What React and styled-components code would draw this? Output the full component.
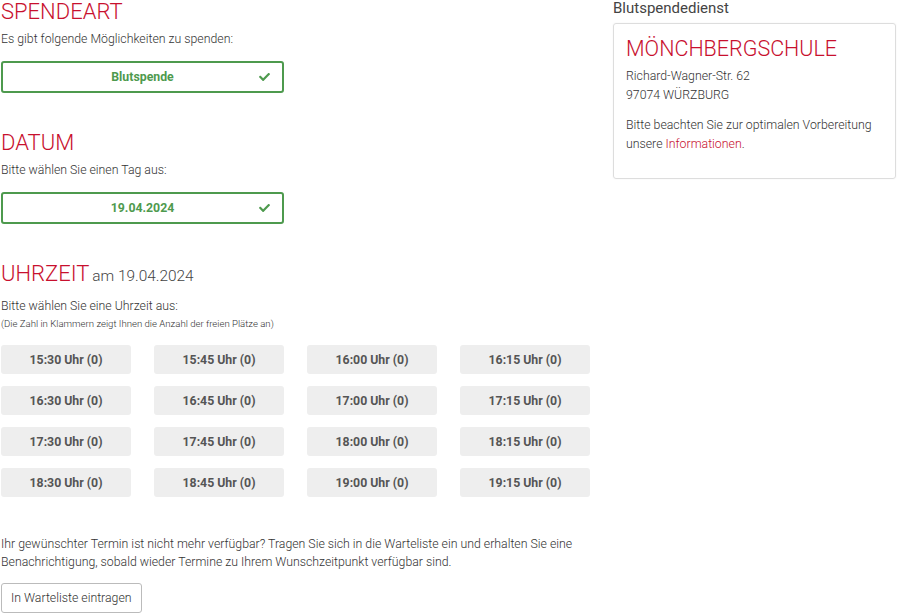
import React from "react";
import styled, { createGlobalStyle } from "styled-components";
import { FaCheck } from "react-icons/fa";

const GlobalStyle = createGlobalStyle`
  body {
    margin: 0;
    background: #fff;
    font-family: Roboto, "Liberation Sans", sans-serif;
    color: #444;
  }
`;

const slots = [
  "15:30", "15:45", "16:00", "16:15",
  "16:30", "16:45", "17:00", "17:15",
  "17:30", "17:45", "18:00", "18:15",
  "18:30", "18:45", "19:00", "19:15",
];

const App = () => {
  return (
    <>
      <GlobalStyle />
      <Page>
        <Main>
          <Section>
            <Heading>SPENDEART</Heading>
            <Hint>Es gibt folgende Möglichkeiten zu spenden:</Hint>
            <Choice>
              Blutspende
              <CheckMark><FaCheck /></CheckMark>
            </Choice>
          </Section>

          <Section>
            <Heading>DATUM</Heading>
            <Hint>Bitte wählen Sie einen Tag aus:</Hint>
            <Choice>
              19.04.2024
              <CheckMark><FaCheck /></CheckMark>
            </Choice>
          </Section>

          <Section>
            <Heading>
              UHRZEIT <SubHeading>am 19.04.2024</SubHeading>
            </Heading>
            <Hint $gap={9}>Bitte wählen Sie eine Uhrzeit aus:</Hint>
            <SmallHint>(Die Zahl in Klammern zeigt Ihnen die Anzahl der freien Plätze an)</SmallHint>
            <SlotGrid>
              {slots.map((s) => (
                <Slot key={s}>{s} Uhr (0)</Slot>
              ))}
            </SlotGrid>
          </Section>

          <WaitText>
            Ihr gewünschter Termin ist nicht mehr verfügbar? Tragen Sie sich in die Warteliste ein und erhalten Sie eine
            Benachrichtigung, sobald wieder Termine zu Ihrem Wunschzeitpunkt verfügbar sind.
          </WaitText>
          <WaitButton>In Warteliste eintragen</WaitButton>
        </Main>

        <Aside>
          <AsideTitle>Blutspendedienst</AsideTitle>
          <Card>
            <CardTitle>MÖNCHBERGSCHULE</CardTitle>
            <CardText>
              Richard-Wagner-Str. 62
              <br />
              97074 WÜRZBURG
            </CardText>
            <CardText>
              Bitte beachten Sie zur optimalen Vorbereitung unsere <Link>Informationen</Link>.
            </CardText>
          </Card>
        </Aside>
      </Page>
    </>
  );
};

const Page = styled.div`
  display: grid;
  grid-template-columns: 590px 283px;
  column-gap: 22px;
  padding-left: 1px;
  width: 898px;
  box-sizing: border-box;
`;

const Main = styled.div`
  display: flex;
  flex-direction: column;
  align-items: flex-start;
`;

const Section = styled.section`
  width: 100%;
  margin-bottom: 38px;
`;

const Heading = styled.h2`
  margin: 0;
  font-size: 22px;
  line-height: 24px;
  font-weight: 300;
  color: #c8102e;
`;

const SubHeading = styled.span`
  font-size: 15.4px;
  color: #444;
  margin-left: -2px;
`;

const Hint = styled.p`
  margin: ${(p) => p.$gap || 6}px 0 0;
  font-size: 12.3px;
  line-height: 18px;
  font-weight: 300;
  color: #333;
`;

const SmallHint = styled.p`
  margin: 2px 0 0;
  font-size: 9.6px;
  line-height: 14px;
  font-weight: 300;
  color: #333;
`;

const Choice = styled.div`
  position: relative;
  margin-top: 13px;
  width: 283px;
  height: 32px;
  box-sizing: border-box;
  border: 2px solid #4e9a4e;
  border-radius: 3px;
  display: flex;
  align-items: center;
  justify-content: center;
  font-size: 12.3px;
  font-weight: 700;
  color: #4e9a4e;
`;

const CheckMark = styled.span`
  position: absolute;
  right: 12px;
  top: 50%;
  transform: translateY(-50%);
  display: flex;
  font-size: 11px;
`;

const SlotGrid = styled.div`
  margin-top: 14px;
  display: grid;
  grid-template-columns: repeat(4, 130px);
  column-gap: 23px;
  row-gap: 12px;
`;

const Slot = styled.div`
  height: 29px;
  display: flex;
  align-items: center;
  justify-content: center;
  background: #eeeeee;
  border-radius: 3px;
  font-size: 12.3px;
  font-weight: 700;
  color: #555;
`;

const WaitText = styled.p`
  margin: 0;
  font-size: 12.3px;
  line-height: 18px;
  font-weight: 300;
  color: #333;
`;

const WaitButton = styled.button`
  margin-top: 12px;
  height: 30px;
  padding: 0 9px;
  background: #fff;
  border: 1px solid #bbb;
  border-radius: 3px;
  font-family: inherit;
  font-size: 12.3px;
  font-weight: 300;
  color: #333;
`;

const Aside = styled.aside`
  display: flex;
  flex-direction: column;
`;

const AsideTitle = styled.div`
  font-size: 15px;
  line-height: 17px;
  color: #444;
`;

const Card = styled.div`
  margin-top: 6px;
  border: 1px solid #ddd;
  border-radius: 3px;
  padding: 13px 12px 25px;
  box-shadow: 0 0 2px rgba(0, 0, 0, 0.06);
`;

const CardTitle = styled.h3`
  margin: 0;
  font-size: 21.5px;
  line-height: 24px;
  font-weight: 300;
  color: #c8102e;
`;

const CardText = styled.p`
  margin: 6px 0 0;
  font-size: 12.3px;
  line-height: 18.5px;
  font-weight: 300;
  color: #333;
  & + & {
    margin-top: 12px;
  }
`;

const Link = styled.span`
  color: #c8102e;
`;

export default App;
